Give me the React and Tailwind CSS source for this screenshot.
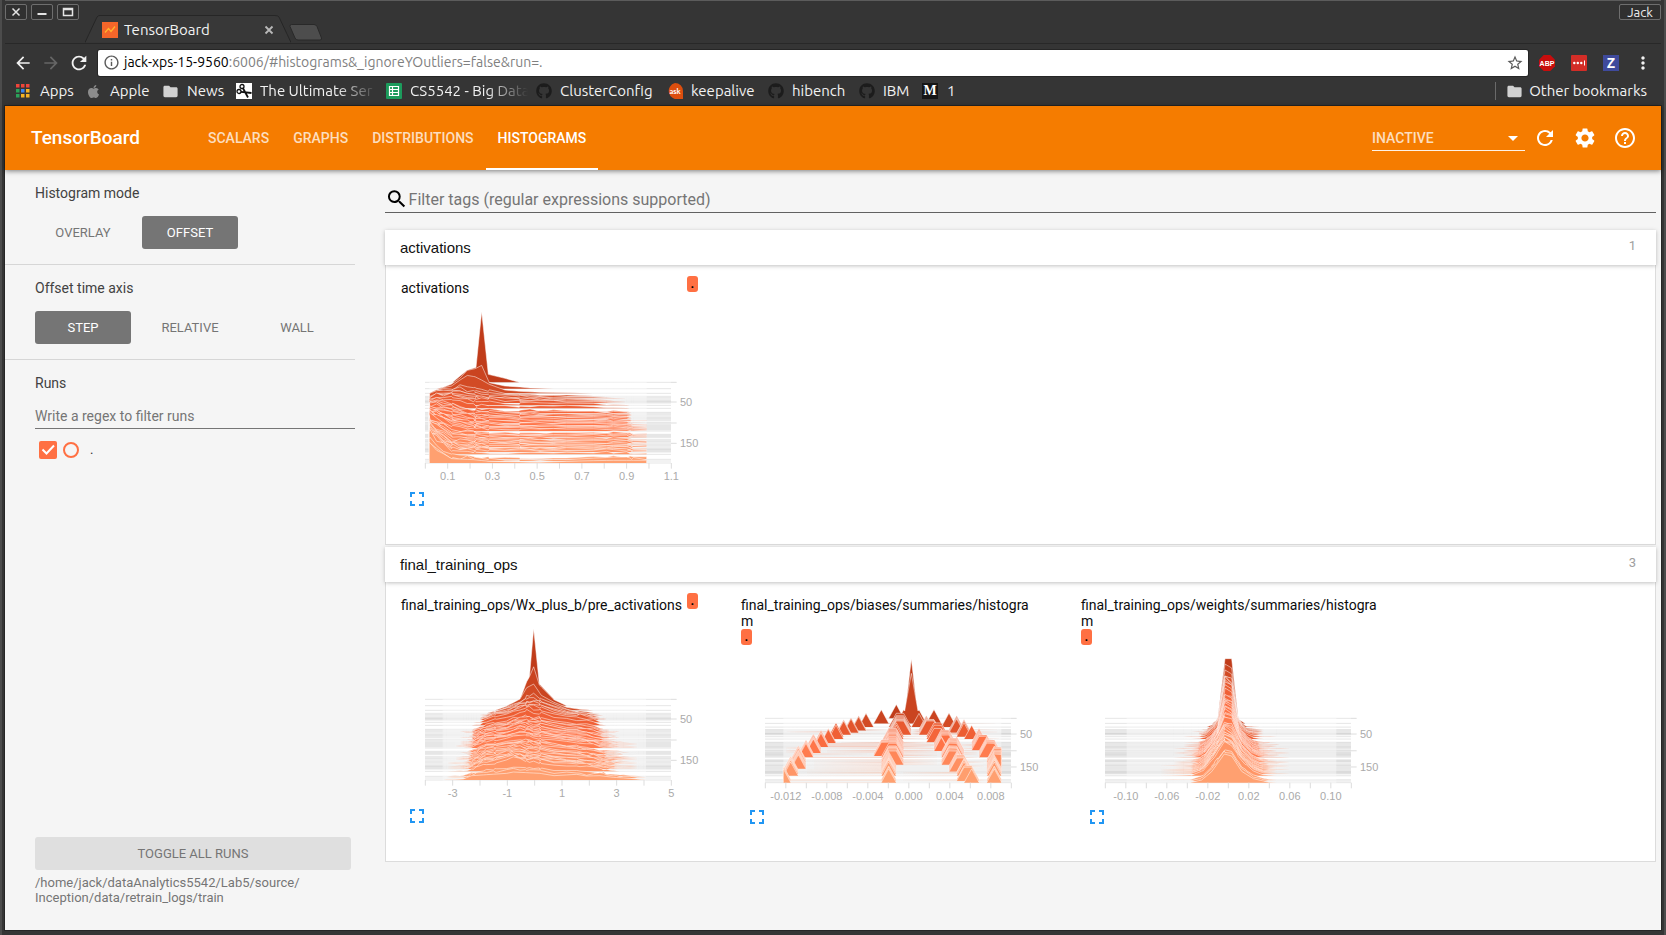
import React from "react";
import {
  MdArrowBack,
  MdArrowForward,
  MdRefresh,
  MdSettings,
  MdHelpOutline,
  MdInfoOutline,
  MdSearch,
  MdFullscreen,
  MdStarBorder,
  MdMoreVert,
  MdFolder,
  MdArrowDropDown,
} from "react-icons/md";
import { FaApple, FaGithub } from "react-icons/fa";

/* ---------- histogram drawing ---------- */

// Baselines of the recorded steps, in chart units (three units to a pixel).
const STEP_OFFSETS = [
  0, 19, 33, 42, 46, 50, 54, 57, 59, 62, 69, 78, 90, 93, 97, 101, 105, 108, 111, 115, 120, 123,
  127, 130, 133, 136, 139, 142, 146, 156, 159, 162, 165, 171, 175, 178, 182, 186, 190, 194, 198,
  201, 203, 206, 209, 216, 231, 236, 242,
];
const SPAN = 242;

function noise(seed) {
  const v = Math.sin(seed * 127.1 + 311.7) * 43758.5453;
  return v - Math.floor(v);
}

function at(points, x) {
  if (x <= points[0][0]) return x === points[0][0] ? points[0][1] : 0;
  for (let i = 1; i < points.length; i++) {
    const [x1, y1] = points[i];
    if (x <= x1) {
      const [x0, y0] = points[i - 1];
      return y0 + ((y1 - y0) * (x - x0)) / (x1 - x0);
    }
  }
  return 0;
}

function track(points, y) {
  if (y < points[0][0] || y > points[points.length - 1][0]) return null;
  return at(points, y);
}

const STOPS = [
  [0, [192, 60, 26]],
  [0.15, [212, 76, 38]],
  [0.28, [236, 92, 50]],
  [0.5, [255, 114, 70]],
  [1, [255, 160, 112]],
];
function shade(t) {
  let i = 1;
  while (i < STOPS.length - 1 && t > STOPS[i][0]) i++;
  const [t0, a] = STOPS[i - 1];
  const [t1, b] = STOPS[i];
  const k = (t - t0) / (t1 - t0);
  return `rgb(${a.map((c, n) => Math.round(c + (b[n] - c) * k)).join(",")})`;
}

function profileRow(frames, range, jitter) {
  const grid = [...new Set(frames.flatMap(([, pts]) => pts.map((p) => p[0])))].sort((a, b) => a - b);
  return (t, base, row) => {
    let i = 1;
    while (i < frames.length - 1 && t > frames[i][0]) i++;
    const [t0, a] = frames[i - 1];
    const [t1, b] = frames[i];
    const k = (t - t0) / (t1 - t0);
    const exact = row < 3 || t === 1;
    const pts = grid.map((x, n) => {
      const h = at(a, x) * (1 - k) + at(b, x) * k;
      const amount = h < 14 ? jitter * 3 : jitter;
      const wob = exact ? 1 : Math.max(0.05, 1 + (noise(row * 13 + n * 7) - 0.5) * amount);
      return [x, base - h * wob];
    });
    return [[range[0], base], ...pts, [range[1], base]];
  };
}

const activationFrames = [
  [0, [[218, 0], [240, 19], [262, 36], [288, 45], [305, 212], [325, 24], [375, 12], [418, 0]]],
  [0.079, [[170, 0], [190, 4], [215, 14], [240, 32], [262, 55], [285, 60], [305, 69], [328, 18], [375, 8], [420, 5], [450, 2], [520, 0]]],
  [0.136, [[150, 0], [170, 10], [190, 17], [215, 22], [240, 40], [262, 54], [285, 50], [305, 40], [328, 27], [375, 10], [420, 6], [480, 3], [560, 2], [640, 0]]],
  [0.18, [[148, 8], [170, 20], [190, 24], [215, 20], [240, 28], [262, 22], [285, 20], [305, 18], [328, 16], [375, 12], [420, 8], [480, 6], [560, 3], [680, 0]]],
  [0.27, [[148, 18], [170, 26], [190, 24], [215, 28], [240, 22], [262, 14], [285, 11], [305, 9], [328, 9], [375, 8], [420, 7], [480, 7], [560, 6], [640, 4], [700, 1], [750, 0]]],
  [0.42, [[148, 36], [170, 38], [190, 32], [215, 26], [240, 19], [262, 12], [285, 9], [328, 8], [375, 6], [420, 6], [480, 6], [560, 5], [640, 5], [700, 5], [740, 3], [755, 0]]],
  [0.62, [[148, 50], [170, 42], [190, 30], [215, 15], [240, 11], [262, 9], [328, 6], [375, 5], [420, 5], [480, 6], [560, 5], [640, 5], [700, 6], [740, 4], [760, 2], [800, 1]]],
  [0.87, [[148, 66], [170, 45], [190, 32], [215, 13], [240, 10], [262, 8], [328, 6], [375, 4], [420, 5], [480, 4], [560, 5], [640, 6], [700, 6], [740, 5], [760, 2], [800, 2]]],
  [1, [[148, 63], [170, 38], [190, 28], [215, 13], [280, 10], [328, 5], [480, 2], [560, 5], [640, 7], [700, 8], [800, 8]]],
];

const preActivationFrames = [
  [0, [[420, 0], [436, 38], [448, 64], [461, 212], [478, 46], [522, 0]]],
  [0.079, [[380, 0], [420, 18], [440, 72], [448, 86], [461, 116], [478, 62], [522, 18], [560, 0]]],
  [0.136, [[345, 0], [380, 12], [420, 34], [440, 68], [461, 79], [484, 45], [522, 24], [560, 9], [600, 3], [640, 0]]],
  [0.18, [[320, 0], [340, 5], [380, 20], [420, 38], [440, 46], [461, 52], [484, 40], [522, 26], [560, 15], [600, 7], [640, 1], [660, 0]]],
  [0.27, [[300, 0], [320, 8], [350, 20], [380, 24], [420, 36], [440, 44], [461, 42], [484, 36], [522, 24], [560, 18], [600, 14], [640, 8], [660, 1], [690, 0]]],
  [0.5, [[240, 0], [275, 1], [290, 9], [320, 20], [350, 24], [380, 26], [420, 40], [440, 36], [461, 32], [484, 30], [522, 24], [560, 19], [600, 16], [640, 10], [670, 2], [720, 0]]],
  [0.72, [[225, 0], [265, 1], [290, 9], [320, 22], [350, 26], [380, 32], [420, 36], [440, 34], [461, 32], [484, 30], [522, 24], [560, 18], [600, 16], [640, 10], [680, 3], [730, 1], [775, 0]]],
  [0.89, [[200, 0], [260, 2], [280, 8], [310, 22], [350, 26], [380, 34], [400, 40], [440, 30], [461, 28], [484, 26], [522, 20], [560, 18], [600, 15], [640, 12], [680, 5], [710, 1], [790, 0]]],
  [1, [[190, 0], [250, 3], [275, 13], [320, 16], [380, 20], [400, 24], [480, 20], [522, 13], [590, 17], [620, 12], [660, 13], [700, 8], [750, 5], [798, 0]]],
];

const weightFrames = [
  [0, [[473, 0], [495, 179], [515, 179], [535, 0]]],
  [0.08, [[457, 0], [473, 12], [495, 178], [515, 166], [535, 12], [556, 0]]],
  [0.2, [[420, 0], [440, 1], [462, 20], [474, 40], [495, 164], [515, 152], [532, 44], [545, 20], [560, 5], [610, 0]]],
  [0.4, [[370, 0], [415, 1], [435, 9], [455, 24], [474, 52], [495, 142], [515, 132], [535, 54], [560, 20], [580, 6], [600, 1], [660, 0]]],
  [0.7, [[340, 0], [395, 1], [415, 5], [435, 18], [465, 62], [493, 110], [515, 102], [545, 48], [575, 17], [600, 4], [630, 1], [690, 0]]],
  [0.9, [[300, 0], [395, 2], [430, 16], [465, 60], [493, 98], [515, 90], [545, 44], [580, 15], [610, 3], [650, 0]]],
  [1, [[390, 0], [425, 8], [455, 33], [493, 86], [515, 80], [545, 34], [580, 12], [627, 1], [650, 0]]],
];

const BIN = 22.6;
const biasTracks = [
  [[0, 529], [15, 484], [28, 439], [37, 416], [42, 393], [52, 360], [65, 336], [80, 305], [92, 283], [112, 259], [132, 236], [148, 230], [160, 212], [193, 194]],
  [[0, 574], [12, 574], [18, 552], [30, 552], [40, 552], [55, 552]],
  [[24, 529], [70, 529], [88, 529], [96, 505], [104, 505], [108, 484], [114, 484]],
  [[44, 529], [90, 529], [100, 529], [140, 529]],
  [[66, 506], [193, 506]],
  [[15, 596], [28, 596], [36, 618], [48, 618], [52, 640], [66, 640], [80, 664], [96, 664], [104, 686], [136, 686], [144, 708], [158, 708], [164, 732], [184, 732], [193, 756]],
  [[44, 642], [62, 664], [88, 686], [100, 708], [146, 710], [156, 732], [170, 732], [176, 750], [193, 756]],
  [[15, 642], [28, 686], [37, 708], [50, 732], [62, 755], [80, 776], [112, 800], [134, 822], [193, 822]],
  [[90, 800], [120, 822], [128, 840], [150, 844]],
];

function biasRow(t, base) {
  const y = t * 193;
  const left = 190;
  const right = 844;
  const peaks = biasTracks
    .map((tr) => track(tr, y))
    .filter((x) => x !== null)
    .map((x) => [574 + Math.round((x - 574) / BIN) * BIN, 42, BIN]);
  if (t < 0.1) peaks.push([574, t === 0 ? 178 : 150, 20]);
  const xs = new Set([left, right]);
  peaks.forEach(([x, , w]) => [x - w, x, x + w].forEach((v) => v > left && v < right && xs.add(Math.round(v))));
  return [
    [left, base],
    ...[...xs]
      .sort((a, b) => a - b)
      .map((x) => [x, base - Math.max(0, ...peaks.map(([p, h, w]) => h * (1 - Math.abs(x - p) / w)))]),
    [right, base],
  ];
}

const tall = { viewBox: "63 93 990 573", height: "h-[191px]", top: 352, scale: 1 };
const short = { viewBox: "63 195 990 480", height: "h-[160px]", top: 415, scale: 193 / 242 };

const charts = {
  activations: {
    ...tall,
    row: profileRow(activationFrames, [148, 800], 0.4),
    intervals: 11,
    labels: ["0.1", "0.3", "0.5", "0.7", "0.9", "1.1"],
  },
  preActivations: {
    ...tall,
    row: profileRow(preActivationFrames, [188, 798], 0.28),
    intervals: 9,
    labels: ["-3", "-1", "1", "3", "5"],
  },
  biases: {
    ...short,
    row: biasRow,
    intervals: 12,
    labels: ["-0.012", "-0.008", "-0.004", "0.000", "0.004", "0.008"],
  },
  weights: {
    ...short,
    row: profileRow(weightFrames, [200, 829], 0.1),
    intervals: 12,
    labels: ["-0.10", "-0.06", "-0.02", "0.02", "0.06", "0.10"],
  },
};

function Histogram({ chart, label }) {
  const { top, scale, intervals, labels, row } = chart;
  const bottom = top + SPAN * scale;
  const step = 738 / intervals;
  const yTicks = [0, 59, 122, 183].map((v) => top + v * scale);
  return (
    <svg viewBox={chart.viewBox} className={`block w-[330px] ${chart.height}`} role="img" aria-label={label}>
      {STEP_OFFSETS.map((offset, i) => {
        const base = top + offset * scale;
        const d = "M" + row(offset / SPAN, base, i).map((p) => p[0].toFixed(1) + " " + p[1].toFixed(1)).join("L");
        return (
          <g key={offset}>
            <path d={`M135 ${base}H873`} stroke="#000" strokeOpacity="0.1" strokeWidth="3" />
            <path d={d} fill={shade(offset / SPAN)} stroke="#fff" strokeOpacity="0.5" strokeWidth="3" />
          </g>
        );
      })}
      <g stroke="#ddd" strokeWidth="3">
        {Array.from({ length: intervals + 1 }, (_, i) => (
          <path key={i} d={`M${136 + i * step} ${bottom}v17`} />
        ))}
        {yTicks.map((y) => (
          <path key={y} d={`M873 ${y}h17`} />
        ))}
      </g>
      <g fill="#aaa" fontSize="33" fontFamily="'Liberation Sans', Arial, sans-serif">
        {labels.map((text, i) => (
          <text key={text} x={136 + (2 * i + 1) * step} y={bottom + 51} textAnchor="middle">
            {text}
          </text>
        ))}
        <text x="900" y={yTicks[1] + 12}>50</text>
        <text x="900" y={yTicks[3] + 12}>150</text>
      </g>
    </svg>
  );
}

/* ---------- browser chrome ---------- */

function WindowButton({ label, children }) {
  return (
    <button aria-label={label} className="flex h-4 w-[22px] items-center justify-center rounded-xs border border-[#6e6e6e] bg-[#303030]">
      <svg viewBox="0 0 12 10" className="h-[10px] w-3" fill="none" stroke="#e4e4e4" strokeWidth="1.5">
        {children}
      </svg>
    </button>
  );
}

function TabStrip() {
  return (
    <div className="flex h-[43px] items-start justify-between border-t border-[#5c5c5c]">
      <div className="flex">
        <div className="flex gap-1 pt-[3px]">
          <WindowButton label="Close window">
            <path d="M2.500 1.500l7 7M9.500 1.500l-7 7" />
          </WindowButton>
          <WindowButton label="Minimize">
            <path d="M1.500 7h9" strokeWidth="2" />
          </WindowButton>
          <WindowButton label="Maximize">
            <path d="M1.500 1.500h9v7h-9zM1.500 2.500h9" />
          </WindowButton>
        </div>
        <div className="relative ml-[6px] mt-[14px] h-[28px] w-[206px]">
          <svg viewBox="0 0 206 28" className="absolute inset-0 h-full w-full" fill="#383838" stroke="#262626">
            <path d="M0 27.500L12 2Q13 .5 15 .5H190Q193 .5 194 2L206 27.500" />
          </svg>
          <div className="relative flex h-full items-center pl-[17px] pr-4 pt-[2px]">
            <svg viewBox="0 0 16 16" className="h-4 w-4">
              <path d="M0 0h16v16H0z" fill="#f4662a" />
              <path d="M3 10.500l3.500-4 2.500 3 4-5" stroke="#ffb52e" strokeWidth="1.300" fill="none" />
            </svg>
            <span className="ml-[6px] flex-1 text-[15px] text-[#f2f2f2]">TensorBoard</span>
            <button aria-label="Close tab" className="h-3 w-3">
              <svg viewBox="0 0 12 12" stroke="#b9b9b9" strokeWidth="1.800">
                <path d="M2.500 2.500l7 7M9.500 2.500l-7 7" />
              </svg>
            </button>
          </div>
        </div>
        <button aria-label="New tab" className="mt-[21px] -ml-[2px]">
          <svg viewBox="0 0 34 17" className="h-[17px] w-[34px]" fill="#4d4d4d" stroke="#292929">
            <path d="M2.500 .5H25q2 0 3 2L32.500 14q.5 2-1.500 2H9q-2 0-3-2L1 2.500q-.500-2 1.500-2z" />
          </svg>
        </button>
      </div>
      <button className="mt-[3px] h-4 w-[42px] rounded-xs border border-[#6e6e6e] bg-[#303030] text-[13px] leading-[14px] text-[#eee]">
        Jack
      </button>
    </div>
  );
}

function Toolbar() {
  return (
    <div className="flex h-[38px] items-center border-t border-[#282828] pl-[8px] pr-[10px] text-[#f2f2f2]">
      <button aria-label="Back"><MdArrowBack className="h-[20px] w-[20px]" /></button>
      <button aria-label="Forward" className="ml-[8px] text-[#666]"><MdArrowForward className="h-[20px] w-[20px]" /></button>
      <button aria-label="Reload" className="ml-[7px]"><MdRefresh className="h-[22px] w-[22px]" /></button>
      <div className="ml-[8px] flex h-[26px] flex-1 items-center rounded-[2px] bg-white pl-[5px] pr-[4px] ring-1 ring-[#262626]">
        <MdInfoOutline className="h-[17px] w-[17px] text-[#5a5a5a]" />
        <span className="ml-[4px] flex-1 text-[14px] text-[#808080]">
          <span className="text-black">jack-xps-15-9560</span>:6006/#histograms&amp;_ignoreYOutliers=false&amp;run=.
        </span>
        <button aria-label="Bookmark this page"><MdStarBorder className="h-[18px] w-[18px] text-[#5a5a5a]" /></button>
      </div>
      <div className="ml-[11px] flex items-center gap-4">
        <button aria-label="Adblock Plus">
          <svg viewBox="0 0 16 16" className="h-4 w-4">
            <path d="M4.700 0h6.600L16 4.700v6.600L11.300 16H4.700L0 11.300V4.700z" fill="#c70d0d" />
            <text x="8" y="10.800" fontSize="7" fontWeight="bold" fill="#fff" textAnchor="middle" fontFamily="'Liberation Sans', sans-serif">ABP</text>
          </svg>
        </button>
        <button aria-label="Password manager">
          <svg viewBox="0 0 16 16" className="h-4 w-4">
            <rect width="16" height="16" rx="1" fill="#d32d27" />
            <g fill="#fff">
              <circle cx="3.300" cy="8" r="1.200" />
              <circle cx="6.800" cy="8" r="1.200" />
              <circle cx="10.300" cy="8" r="1.200" />
              <path d="M13 5.500h1v5h-1z" />
            </g>
          </svg>
        </button>
        <button aria-label="Zotero" className="h-4 w-4 bg-[#3f4a9c] text-[14px] font-bold leading-4 text-white">Z</button>
        <button aria-label="Menu"><MdMoreVert className="h-[20px] w-[20px] -mx-[2px]" /></button>
      </div>
    </div>
  );
}

const appColors = ["#f0453a", "#f0453a", "#f0453a", "#2ba35a", "#3a86f0", "#f5b324", "#2ba35a", "#f5b324", "#f5b324"];

function AppsIcon() {
  return (
    <svg viewBox="0 0 14 14" className="h-[14px] w-[14px]">
      {appColors.map((c, i) => (
        <rect key={i} x={(i % 3) * 5} y={Math.floor(i / 3) * 5} width="3.500" height="3.500" fill={c} />
      ))}
    </svg>
  );
}

function ScissorsIcon() {
  return (
    <svg viewBox="0 0 16 16" className="h-4 w-4">
      <path d="M0 0h16v16H0z" fill="#fff" />
      <g fill="none" stroke="#111" strokeWidth="1.300">
        <circle cx="6" cy="3.500" r="2" />
        <circle cx="3" cy="8.500" r="2" />
        <path d="M5 8.800L15.500 10M7 5.300L12 14.500" strokeWidth="1.800" />
      </g>
    </svg>
  );
}

function SheetsIcon() {
  return (
    <svg viewBox="0 0 16 16" className="h-4 w-4">
      <rect width="16" height="16" rx="1" fill="#1c9b5c" />
      <path d="M3.500 3.500h9v9h-9zM3.500 6.500h9M3.500 9.500h9M6.500 3.500v9" fill="none" stroke="#fff" strokeWidth="1.200" />
    </svg>
  );
}

function AskIcon() {
  return (
    <svg viewBox="0 0 16 16" className="h-4 w-4">
      <path d="M8 0a8 8 0 0 1 8 8v8h-4a8 8 0 1 1-4-16z" fill="#dc4e0e" />
      <text x="8" y="10.500" fontSize="7.500" fontWeight="bold" fill="#fff" textAnchor="middle" fontFamily="Lato, sans-serif">ask</text>
    </svg>
  );
}

function MediumIcon() {
  return (
    <span className="block h-4 w-4 bg-[#161616] text-center font-['Liberation_Serif',serif] text-[14px] font-bold leading-4 text-white">M</span>
  );
}

const fade = "[mask-image:linear-gradient(to_right,#000_65%,transparent)]";
const bookmarks = [
  { text: "Apps", icon: <AppsIcon />, width: "w-[72px]", gap: "gap-[10px]" },
  { text: "Apple", icon: <FaApple className="-ml-[2px] h-[15px] w-[15px] text-[#8c8c8c]" />, width: "w-[75px]", gap: "gap-[9px]" },
  { text: "News", icon: <MdFolder className="-ml-[1px] h-[17px] w-[17px] text-[#d2d2d2]" />, width: "w-[73px]", gap: "gap-[8px]" },
  { text: "The Ultimate Ser", icon: <ScissorsIcon />, width: "w-[150px]", gap: "gap-2", label: `w-[118px] ${fade}` },
  { text: "CS5542 - Big Data", icon: <SheetsIcon />, width: "w-[150px]", gap: "gap-2", label: `w-[118px] ${fade}` },
  { text: "ClusterConfig", icon: <FaGithub className="h-4 w-4 text-[#1c1c1c]" />, width: "w-[131px]", gap: "gap-2" },
  { text: "keepalive", icon: <AskIcon />, width: "w-[101px]", gap: "gap-2" },
  { text: "hibench", icon: <FaGithub className="h-4 w-4 text-[#1c1c1c]" />, width: "w-[91px]", gap: "gap-2" },
  { text: "IBM", icon: <FaGithub className="h-4 w-4 text-[#1c1c1c]" />, width: "w-[63px]", gap: "gap-2" },
  { text: "1", icon: <MediumIcon />, width: "w-[40px]", gap: "gap-[9px]" },
];

function BookmarksBar() {
  return (
    <nav aria-label="Bookmarks" className="flex h-[25px] items-start justify-between pl-[11px] pr-[14px] pt-px text-[15px] leading-[18px] text-[#f2f2f2]">
      <div className="flex">
        {bookmarks.map((b) => (
          <a key={b.text} href="#" className={`flex items-center whitespace-nowrap ${b.width} ${b.gap}`}>
            <span className="shrink-0">{b.icon}</span>
            <span className={b.label || ""}>{b.text}</span>
          </a>
        ))}
      </div>
      <a href="#" className="flex items-center gap-[6px] border-l border-[#6a6a6a] pl-[10px]">
        <MdFolder className="h-[17px] w-[17px] text-[#d2d2d2]" />
        Other bookmarks
      </a>
    </nav>
  );
}

/* ---------- TensorBoard ---------- */

const tabs = ["SCALARS", "GRAPHS", "DISTRIBUTIONS", "HISTOGRAMS"];

function Header() {
  return (
    <header className="relative z-10 flex h-16 items-center bg-[#f57c00] pl-[26px] pr-[24px] text-white shadow-[0_1px_5px_rgba(0,0,0,0.5)]">
      <h1 className="w-[165px] text-[19px] font-medium">TensorBoard</h1>
      <nav className="flex h-full text-[14px] font-medium">
        {tabs.map((t) => (
          <button
            key={t}
            className={`h-full border-y-2 border-t-transparent px-3 ${t === "HISTOGRAMS" ? "border-b-white" : "border-b-transparent text-white/75"}`}
          >
            {t}
          </button>
        ))}
      </nav>
      <div className="ml-auto flex items-center">
        <div className="relative mr-[8px] w-[153px] border-b border-white/90 pt-px">
          <select aria-label="Inactive dashboards" className="h-6 w-full appearance-none bg-transparent text-[14px] font-medium text-white/75 outline-none">
            <option>INACTIVE</option>
          </select>
          <MdArrowDropDown className="pointer-events-none absolute right-0 top-[1px] h-[24px] w-[24px]" />
        </div>
        <div className="flex gap-4">
          <button aria-label="Reload data"><MdRefresh className="h-6 w-6" /></button>
          <button aria-label="Settings"><MdSettings className="h-6 w-6" /></button>
          <button aria-label="Help"><MdHelpOutline className="h-6 w-6" /></button>
        </div>
      </div>
    </header>
  );
}

function Choice({ title, options, selected }) {
  return (
    <section className="border-b border-[#d6d6d6] pb-[15px] pl-[30px]">
      <h2 className="pt-[14px] text-[14px] leading-[18px] text-[#424242]">{title}</h2>
      <div className="mt-[14px] flex gap-[11px]">
        {options.map((o) => (
          <button
            key={o}
            aria-pressed={o === selected}
            className={`h-[33px] w-24 rounded-[3px] text-[13px] ${o === selected ? "bg-[#757575] text-white" : "text-[#757575]"}`}
          >
            {o}
          </button>
        ))}
      </div>
    </section>
  );
}

function Sidebar() {
  return (
    <aside className="flex w-[350px] shrink-0 flex-col">
      <Choice title="Histogram mode" options={["OVERLAY", "OFFSET"]} selected="OFFSET" />
      <Choice title="Offset time axis" options={["STEP", "RELATIVE", "WALL"]} selected="STEP" />
      <section className="flex flex-1 flex-col pl-[30px]">
        <h2 className="pt-[14px] text-[14px] leading-[18px] text-[#424242]">Runs</h2>
        <input
          aria-label="Filter runs"
          placeholder="Write a regex to filter runs"
          className="mt-[11px] h-[26px] w-full border-b border-[#757575] bg-transparent text-[14px] outline-none placeholder:text-[#757575]"
        />
        <div className="mt-[10px] flex items-center pl-1">
          <label className="relative flex items-center gap-[33px]">
            <input type="checkbox" defaultChecked className="h-[18px] w-[18px] appearance-none rounded-[2px] bg-[#ff7043]" />
            <svg viewBox="0 0 18 18" className="pointer-events-none absolute left-0 top-[2px] h-[18px] w-[18px]" fill="none" stroke="#fff" strokeWidth="2">
              <path d="M3.500 8.500l4 4 7.500-8" />
            </svg>
            <span className="text-[13px] leading-[22px] text-[#333]">.</span>
          </label>
          <input type="radio" name="only-run" aria-label="Show only this run" className="-ml-[30px] h-4 w-4 appearance-none rounded-full border-2 border-[#ff7043]" />
        </div>
        <div className="mt-auto pb-[25px]">
          <button className="h-[33px] w-[316px] rounded-[3px] bg-[#dfdfdf] text-[13px] text-[#757575]">TOGGLE ALL RUNS</button>
          <p className="mt-1 pt-px text-[13px] leading-[15px] text-[#757575]">
            /home/jack/dataAnalytics5542/Lab5/source/
            <br />
            Inception/data/retrain_logs/train
          </p>
        </div>
      </section>
    </aside>
  );
}

function Card({ title, chart }) {
  return (
    <article className="w-[340px]">
      <div className="flex w-[297px] flex-wrap items-start justify-between">
        <h3 className="max-w-full break-all pt-1 text-[14px] leading-4 text-[#0c0c0c]">{title}</h3>
        <span className="h-4 w-[11px] rounded-[3px] bg-[#ff7043] text-center text-[13px] font-bold leading-4 text-black">.</span>
      </div>
      <Histogram chart={chart} label={`Histogram of ${title}`} />
      <button aria-label="Expand chart" className="ml-1 block">
        <MdFullscreen className="h-6 w-6 text-[#2196f3]" />
      </button>
    </article>
  );
}

function Category({ name, cards }) {
  return (
    <section>
      <button className="relative flex h-[35px] w-full items-center justify-between bg-white pl-[15px] pr-[20px] shadow-[0_1px_4px_rgba(0,0,0,0.25)]">
        <span className="pt-[2px] font-['Liberation_Sans',Arial,sans-serif] text-[15px] text-[#111]">{name}</span>
        <span className="pb-[3px] text-[13px] text-[#9e9e9e]">{cards.length}</span>
      </button>
      <div className="flex min-h-[280px] flex-wrap border border-t-0 border-[#dcdcdc] bg-white pl-[15px] pt-[11px]">
        {cards.map((c) => (
          <Card key={c.title} {...c} />
        ))}
      </div>
    </section>
  );
}

const categories = [
  { name: "activations", cards: [{ title: "activations", chart: charts.activations }] },
  {
    name: "final_training_ops",
    cards: [
      { title: "final_training_ops/Wx_plus_b/pre_activations", chart: charts.preActivations },
      { title: "final_training_ops/biases/summaries/histogram", chart: charts.biases },
      { title: "final_training_ops/weights/summaries/histogram", chart: charts.weights },
    ],
  },
];

function Dashboard() {
  return (
    <main className="ml-[30px] mr-[5px] min-w-0 flex-1">
      <div className="mt-4 flex h-[27px] items-center border-b border-[#616161]">
        <MdSearch className="h-6 w-6 text-black" />
        <input
          aria-label="Filter tags"
          placeholder="Filter tags (regular expressions supported)"
          className="w-full bg-transparent pt-px text-[16px] outline-none placeholder:text-[#757575]"
        />
      </div>
      <div className="mt-[17px] flex flex-col gap-[2px]">
        {categories.map((c) => (
          <Category key={c.name} {...c} />
        ))}
      </div>
    </main>
  );
}

export default function App() {
  return (
    <div className="flex min-h-screen flex-col border-x-2 border-[#4c4c4c] bg-[#353535] px-[3px] pb-[5px] font-['Ubuntu','Noto_Sans',sans-serif]">
      <TabStrip />
      <Toolbar />
      <BookmarksBar />
      <div className="flex flex-1 flex-col bg-[#f5f5f5] font-[Roboto,sans-serif] outline outline-[#262626]">
        <Header />
        <div className="flex flex-1">
          <Sidebar />
          <Dashboard />
        </div>
      </div>
    </div>
  );
}
